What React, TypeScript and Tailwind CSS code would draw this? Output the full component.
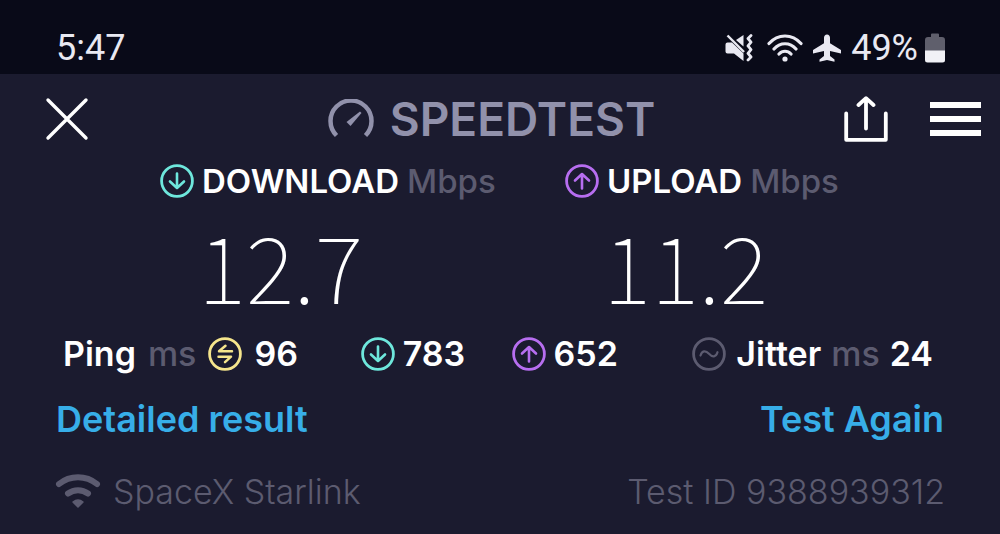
import type { ReactNode } from "react";

type CircleIconProps = {
  className: string;
  children: ReactNode;
};

const CircleIcon = ({ className, children }: CircleIconProps) => (
  <svg
    viewBox="0 0 34 34"
    fill="none"
    stroke="currentColor"
    strokeWidth="2.8"
    strokeLinecap="round"
    strokeLinejoin="round"
    className={`size-[34px] shrink-0 ${className}`}
    aria-hidden="true"
  >
    <circle cx="17" cy="17" r="15.4" />
    {children}
  </svg>
);

const DownIcon = () => (
  <CircleIcon className="text-[#6ee7dc]">
    <path d="M17 9.500v14M10 17.500l7 6.500l7-6.500" strokeWidth="2.6" />
  </CircleIcon>
);

const UpIcon = () => (
  <CircleIcon className="text-[#b76ef0]">
    <path d="M17 24.500v-14M10 16.500l7-6.500l7 6.500" strokeWidth="2.6" />
  </CircleIcon>
);

const PingIcon = () => (
  <CircleIcon className="text-[#f5e58c]">
    <path d="M24 14.300H11L17.500 8.800M10.500 19.700H23L17 25.200" strokeWidth="2.5" />
  </CircleIcon>
);

const JitterIcon = () => (
  <CircleIcon className="text-[#5c5b70]">
    <path d="M8.500 18.500c1.500-5 5-5.500 8.500-1.700s7 3.400 8.500-1.600" strokeWidth="2.2" />
  </CircleIcon>
);

const StatusBar = () => (
  <div className="flex h-[74px] items-center justify-between bg-[#090a18] pt-[24px] pr-[55px] pb-[2px] pl-[56px] font-[Roboto,sans-serif] text-[36px] text-[#e9e9f2]">
    <span>5:47</span>
    <div className="flex items-center">
      <svg viewBox="0 0 28 28" className="mr-[14px] h-7 w-7" fill="none" aria-hidden="true">
        <path d="M18.500 1v11.500L11 6z" fill="currentColor" />
        <path d="M2.500 8.500H7L18.500 19.500V27L9 19.500H2.500Q.5 19.500.5 17.500v-7Q.5 8.500 2.500 8.500z" fill="currentColor" />
        <path d="M2.500 1.500L19 18" stroke="currentColor" strokeWidth="2.400" />
        <path
          d="M26 1.500l-3 3 3 3.700-3 3.700 3 3.700-3 3.700 3 3.700-3 3"
          stroke="currentColor"
          strokeWidth="2.800"
          strokeLinejoin="round"
          strokeLinecap="round"
        />
      </svg>
      <svg
        viewBox="0 0 36 28"
        className="mr-[9px] h-7 w-9"
        fill="none"
        stroke="currentColor"
        strokeWidth="3.200"
        strokeLinecap="round"
        aria-hidden="true"
      >
        <path d="M2 9.500C11-.5 25-.5 34 9.500M7 15c6-7 16-7 22 0M12 20c3.500-3.700 8.500-3.700 12 0" />
        <circle cx="18" cy="25" r="2.600" fill="currentColor" stroke="none" />
      </svg>
      <svg viewBox="0 0 30 28" className="mr-[9px] h-7 w-[30px]" fill="currentColor" aria-hidden="true">
        <path d="M15 .5c1.800 0 3 1.500 3 3.300v5.500L29 16v3.500l-11-2.600v5l4.500 3.600v2.300L15 26l-7.500 1.800v-2.300l4.500-3.600v-5L1 19.500V16l11-6.700V3.800C12 2 13.200.5 15 .5z" />
      </svg>
      <span>49%</span>
      <svg viewBox="0 0 20 30" className="ml-[7px] h-[30px] w-5" aria-hidden="true">
        <path d="M6 1.500Q6 .5 7 .5h6q1 0 1 1V4h3q3 0 3 3v11H0V7q0-3 3-3h3z" fill="#5f5f6c" />
        <path d="M0 17.500h20V27q0 2.500-2.500 2.500h-15Q0 29.500 0 27z" fill="#f1f1f6" />
      </svg>
    </div>
  </div>
);

const Header = () => (
  <header className="grid h-[84px] grid-cols-[283fr_auto_326fr] items-center pt-[6px] pr-[19px] pl-[45px]">
    <button type="button" aria-label="Close" className="justify-self-start">
      <svg
        viewBox="0 0 44 44"
        className="size-11"
        stroke="currentColor"
        strokeWidth="3.4"
        strokeLinecap="round"
        aria-hidden="true"
      >
        <path d="M3 3l38 38M41 3L3 41" />
      </svg>
    </button>
    <div className="flex items-center gap-4 text-[#9191ab]">
      <svg viewBox="0 0 46 40" className="h-10 w-[46px]" fill="none" aria-hidden="true">
        <path d="M8.500 36.500A20.500 20.500 0 1 1 37.500 36.500" stroke="currentColor" strokeWidth="4.500" />
        <path d="M18.500 23L32 12.500l1.500 1.500L22.500 27z" fill="currentColor" />
      </svg>
      <h1 className="text-[46px] leading-none font-semibold">SPEEDTEST</h1>
    </div>
    <div className="flex items-center gap-[42px] justify-self-end">
      <button type="button" aria-label="Share">
        <svg
          viewBox="0 0 44 46"
          className="h-[46px] w-11"
          fill="none"
          stroke="currentColor"
          strokeWidth="3.800"
          strokeLinecap="round"
          strokeLinejoin="round"
          aria-hidden="true"
        >
          <path d="M2.200 17.500v26.300h39.600V17.500M22 32.500V2.500M14.500 9L22 2.200 29.500 9" />
        </svg>
      </button>
      <button type="button" aria-label="Menu" className="flex flex-col gap-2">
        <span className="h-[6px] w-[51px] bg-white" />
        <span className="h-[6px] w-[51px] bg-white" />
        <span className="h-[6px] w-[51px] bg-white" />
      </button>
    </div>
  </header>
);

type SpeedProps = {
  label: string;
  value: string;
  icon: ReactNode;
};

const Speed = ({ label, value, icon }: SpeedProps) => (
  <div>
    <div className="flex h-[46px] items-center gap-2 text-[33px] leading-none">
      {icon}
      <h2 className="font-semibold">{label}</h2>
      <span className="font-medium text-[#5c5b70]">Mbps</span>
    </div>
    <p className="flex h-[120px] items-center pl-[38px] font-['Noto_Sans_CJK_JP',sans-serif] text-[92px] leading-none font-thin">
      {value}
    </p>
  </div>
);

const App = () => {
  return (
    <div className="min-h-screen bg-[#1b1b2f] font-[Inter,sans-serif] text-white">
      <StatusBar />
      <Header />

      <main>
        <section className="grid grid-cols-[405fr_435fr] pl-[16%]">
          <Speed label="DOWNLOAD" value="12.7" icon={<DownIcon />} />
          <Speed label="UPLOAD" value="11.2" icon={<UpIcon />} />
        </section>

        <section className="grid h-[60px] grid-cols-[298fr_151fr_181fr_240fr] items-center pr-[67px] pl-[63px] text-[34px] leading-none font-semibold">
          <div className="flex items-center gap-3">
            <span>Ping</span>
            <span className="font-medium text-[#5c5b70]">ms</span>
            <PingIcon />
            <span>96</span>
          </div>
          <div className="flex items-center gap-2">
            <DownIcon />
            <span>783</span>
          </div>
          <div className="flex items-center gap-2">
            <UpIcon />
            <span>652</span>
          </div>
          <div className="flex items-center gap-[10px]">
            <JitterIcon />
            <span>Jitter</span>
            <span className="font-medium text-[#5c5b70]">ms</span>
            <span>24</span>
          </div>
        </section>

        <nav className="flex h-[70px] items-center justify-between px-[56px] text-[36px] font-semibold text-[#37aee8]">
          <a href="#details">Detailed result</a>
          <a href="#again">Test Again</a>
        </nav>

        <footer className="flex h-[74px] items-center justify-between px-[55px] text-[34px] font-light text-[#5c5b70]">
          <div className="flex items-center gap-3">
            <svg
              viewBox="0 0 46 36"
              className="h-9 w-[46px]"
              fill="none"
              stroke="currentColor"
              strokeWidth="6"
              strokeLinecap="round"
              aria-hidden="true"
            >
              <path d="M4 11C15 2 31 2 42 11M13 20.500c6-4.500 14-4.500 20 0" />
              <path d="M18 29q5-4 10 0l-5 5z" fill="currentColor" stroke="currentColor" strokeWidth="1.500" strokeLinejoin="round" />
            </svg>
            <span>SpaceX Starlink</span>
          </div>
          <span>Test ID 9388939312</span>
        </footer>
      </main>
    </div>
  );
};

export default App;
